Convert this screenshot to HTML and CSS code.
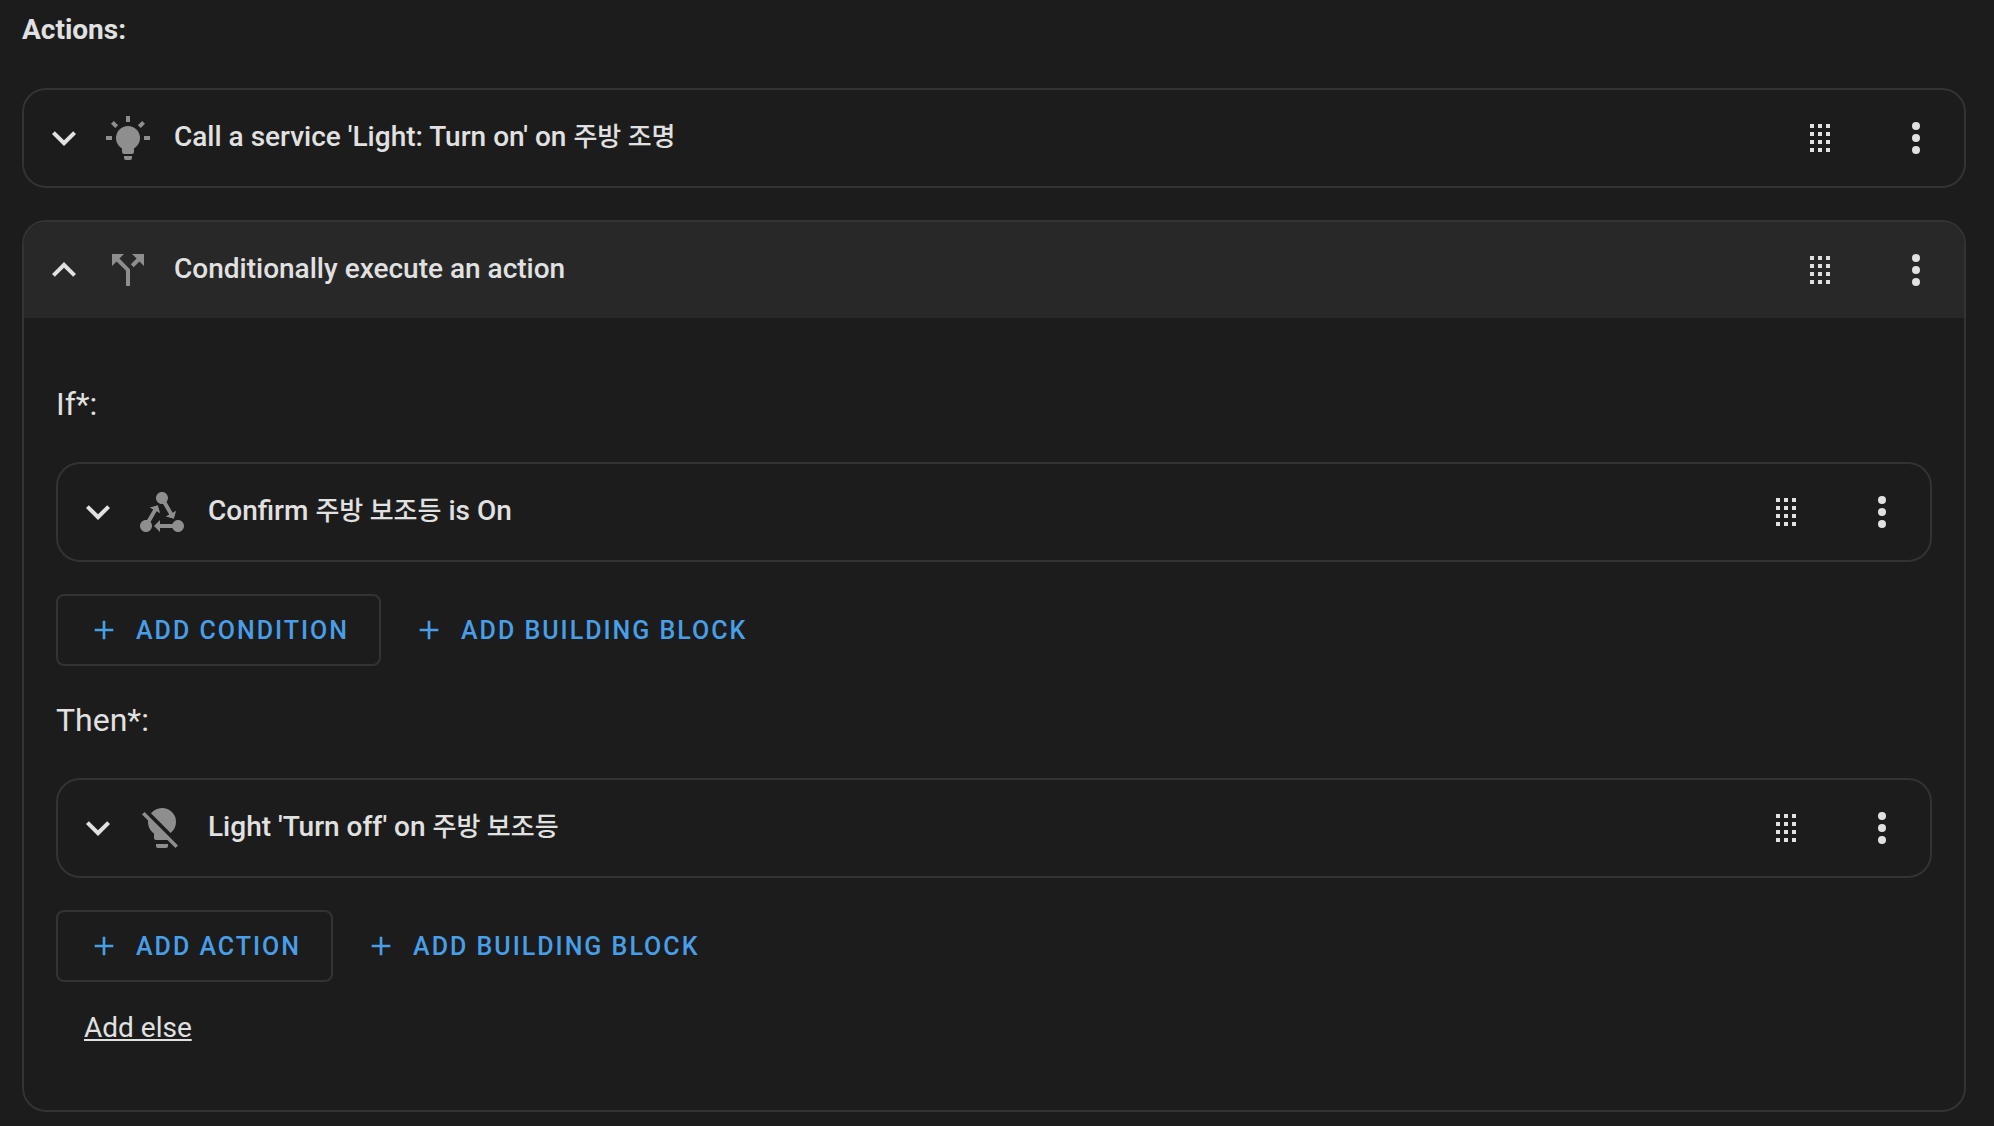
FILE: index.html
```
<!DOCTYPE html>
<html lang="en">
<head>
  <meta charset="UTF-8">
  <meta name="viewport" content="width=device-width, initial-scale=1.0">
  <title>Automation actions</title>
  <link rel="stylesheet" href="styles.css">
</head>
<body>
  <!-- shared icons -->
  <svg class="sprite" aria-hidden="true">
    <symbol id="chevron-down" viewBox="0 0 24 24"><path d="M7.41,8.58L12,13.17L16.59,8.58L18,10L12,16L6,10L7.41,8.58Z"/></symbol>
    <symbol id="chevron-up" viewBox="0 0 24 24"><path d="M7.41,15.41L12,10.83L16.59,15.41L18,14L12,8L6,14L7.41,15.41Z"/></symbol>
    <symbol id="drag" viewBox="0 0 24 24"><path d="M7,19V17H9V19H7M11,19V17H13V19H11M15,19V17H17V19H15M7,15V13H9V15H7M11,15V13H13V15H11M15,15V13H17V15H15M7,11V9H9V11H7M11,11V9H13V11H11M15,11V9H17V11H15M7,7V5H9V7H7M11,7V5H13V7H11M15,7V5H17V7H15Z"/></symbol>
    <symbol id="dots" viewBox="0 0 24 24"><path d="M12,16A2,2 0 0,1 14,18A2,2 0 0,1 12,20A2,2 0 0,1 10,18A2,2 0 0,1 12,16M12,10A2,2 0 0,1 14,12A2,2 0 0,1 12,14A2,2 0 0,1 10,12A2,2 0 0,1 12,10M12,4A2,2 0 0,1 14,6A2,2 0 0,1 12,8A2,2 0 0,1 10,6A2,2 0 0,1 12,4Z"/></symbol>
    <symbol id="plus" viewBox="0 0 24 24"><path d="M19,13H13V19H11V13H5V11H11V5H13V11H19V13Z"/></symbol>
  </svg>

  <main class="actions">
    <h1 class="page-title">Actions:</h1>

    <section class="card">
      <div class="card-header">
        <button class="toggle" aria-label="Expand" aria-expanded="false"><svg class="icon"><use href="#chevron-down"/></svg></button>
        <svg class="icon type-icon" viewBox="0 0 24 24"><path d="M12,6A6,6 0 0,1 18,12C18,14.22 16.79,16.16 15,17.2V19A1,1 0 0,1 14,20H10A1,1 0 0,1 9,19V17.2C7.21,16.16 6,14.22 6,12A6,6 0 0,1 12,6M14,21V22A1,1 0 0,1 13,23H11A1,1 0 0,1 10,22V21H14M20,11H23V13H20V11M1,11H4V13H1V11M13,1V4H11V1H13M4.92,3.5L7.05,5.64L5.63,7.05L3.5,4.93L4.92,3.5M16.95,5.63L19.07,3.5L20.5,4.93L18.37,7.05L16.95,5.63Z"/></svg>
        <h2 class="card-title">Call a service 'Light: Turn on' on <span class="entity" lang="ko">주방 조명</span></h2>
        <button class="icon-btn" aria-label="Move"><svg class="icon"><use href="#drag"/></svg></button>
        <button class="icon-btn" aria-label="Menu"><svg class="icon"><use href="#dots"/></svg></button>
      </div>
    </section>

    <section class="card">
      <div class="card-header open">
        <button class="toggle" aria-label="Collapse" aria-expanded="true"><svg class="icon"><use href="#chevron-up"/></svg></button>
        <svg class="icon type-icon" viewBox="0 0 24 24"><path d="M14,4L16.29,6.29L13.41,9.17L14.83,10.59L17.71,7.71L20,10V4M10,4H4V10L6.29,7.71L11,12.41V20H13V11.59L7.71,6.29"/></svg>
        <h2 class="card-title">Conditionally execute an action</h2>
        <button class="icon-btn" aria-label="Move"><svg class="icon"><use href="#drag"/></svg></button>
        <button class="icon-btn" aria-label="Menu"><svg class="icon"><use href="#dots"/></svg></button>
      </div>

      <div class="card-content">
        <h3 class="block-title">If*:</h3>
        <div class="card">
          <div class="card-header">
            <button class="toggle" aria-label="Expand" aria-expanded="false"><svg class="icon"><use href="#chevron-down"/></svg></button>
            <svg class="icon type-icon" viewBox="0 0 24 24"><path d="M6.27 17.05C6.72 17.58 7 18.25 7 19C7 20.66 5.66 22 4 22S1 20.66 1 19 2.34 16 4 16C4.18 16 4.36 16 4.53 16.05L7.6 10.69L5.86 9.7L9.95 8.58L11.07 12.67L9.33 11.68L6.27 17.05M20 16C18.7 16 17.6 16.84 17.18 18H11V16L8 19L11 22V20H17.18C17.6 21.16 18.7 22 20 22C21.66 22 23 20.66 23 19S21.66 16 20 16M12 8C12.18 8 12.36 8 12.53 7.95L15.6 13.31L13.86 14.3L17.95 15.42L19.07 11.33L17.33 12.32L14.27 6.95C14.72 6.42 15 5.75 15 5C15 3.34 13.66 2 12 2S9 3.34 9 5 10.34 8 12 8Z"/></svg>
            <h4 class="card-title">Confirm <span class="entity" lang="ko">주방 보조등</span> is On</h4>
            <button class="icon-btn" aria-label="Move"><svg class="icon"><use href="#drag"/></svg></button>
            <button class="icon-btn" aria-label="Menu"><svg class="icon"><use href="#dots"/></svg></button>
          </div>
        </div>
        <div class="buttons">
          <button class="btn outlined"><svg class="btn-icon"><use href="#plus"/></svg>ADD CONDITION</button>
          <button class="btn"><svg class="btn-icon"><use href="#plus"/></svg>ADD BUILDING BLOCK</button>
        </div>

        <h3 class="block-title">Then*:</h3>
        <div class="card">
          <div class="card-header">
            <button class="toggle" aria-label="Expand" aria-expanded="false"><svg class="icon"><use href="#chevron-down"/></svg></button>
            <svg class="icon type-icon" viewBox="0 0 24 24"><path d="M12,2C9.76,2 7.78,3.05 6.5,4.68L16.31,14.5C17.94,13.21 19,11.24 19,9A7,7 0 0,0 12,2M3.28,4L2,5.27L5.04,8.3C5,8.53 5,8.76 5,9C5,11.38 6.19,13.47 8,14.74V17A1,1 0 0,0 9,18H14.73L18.73,22L20,20.72L3.28,4M9,20V21A1,1 0 0,0 10,22H14A1,1 0 0,0 15,21V20H9Z"/></svg>
            <h4 class="card-title">Light 'Turn off' on <span class="entity" lang="ko">주방 보조등</span></h4>
            <button class="icon-btn" aria-label="Move"><svg class="icon"><use href="#drag"/></svg></button>
            <button class="icon-btn" aria-label="Menu"><svg class="icon"><use href="#dots"/></svg></button>
          </div>
        </div>
        <div class="buttons">
          <button class="btn outlined"><svg class="btn-icon"><use href="#plus"/></svg>ADD ACTION</button>
          <button class="btn"><svg class="btn-icon"><use href="#plus"/></svg>ADD BUILDING BLOCK</button>
        </div>

        <a class="add-else" href="#">Add else</a>
      </div>
    </section>
  </main>
</body>
</html>
```
FILE: styles.css
```
* {
  box-sizing: border-box;
  margin: 0;
  padding: 0;
}

body {
  background-color: #1c1c1c;
  color: #e1e1e1;
  font-family: Roboto, "Noto Sans CJK KR", sans-serif;
  font-size: 28px;
  line-height: 40px;
}

button {
  font-family: inherit;
  color: inherit;
  background: none;
  border: none;
  cursor: pointer;
}

.sprite {
  display: none;
}

.actions {
  display: flex;
  flex-direction: column;
  gap: 32px;
  padding: 10px 28px 14px 22px;
}

.page-title {
  font-size: 28px;
  font-weight: 700;
  line-height: 40px;
  margin-bottom: 6px;
}

.card {
  border: 2px solid #333;
  border-radius: 24px;
  overflow: hidden;
}

.card-header {
  display: flex;
  align-items: center;
  padding-left: 16px;
}

.card-header.open {
  background-color: #282828;
}

.icon {
  display: block;
  width: 48px;
  height: 48px;
  fill: currentColor;
}

.type-icon {
  color: #8e8e8e;
  margin: 0 22px 0 16px;
}

.card-title {
  flex: 1;
  font-size: 28px;
  font-weight: 500;
  line-height: 40px;
  padding-bottom: 2px;
}

.entity {
  font-size: 26px;
  line-height: 1;
}

.icon-btn {
  padding: 24px;
}

.card-content {
  display: flex;
  flex-direction: column;
  padding: 66px 32px 62px;
}

.block-title {
  font-size: 32px;
  font-weight: 400;
  line-height: 40px;
  margin-bottom: 38px;
}

.buttons {
  display: flex;
  gap: 2px;
  margin: 32px 0 34px;
}

.btn {
  display: flex;
  align-items: center;
  height: 72px;
  padding: 0 30px;
  border-radius: 8px;
  color: #489fe8;
  font-size: 25px;
  font-weight: 500;
  letter-spacing: 2px;
}

.btn.outlined {
  border: 2px solid #333;
}

.btn-icon {
  width: 32px;
  height: 32px;
  margin-right: 16px;
  fill: currentColor;
}

.add-else {
  align-self: flex-start;
  margin: -8px 0 0 28px;
  color: inherit;
}
```
